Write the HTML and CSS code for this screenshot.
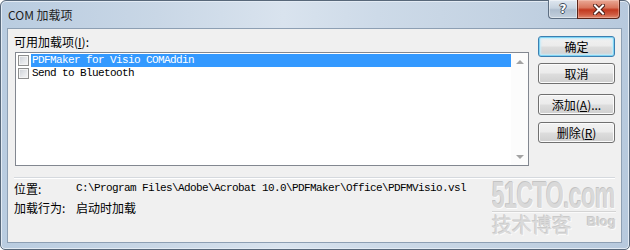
FILE: index.html
```html
<!DOCTYPE html>
<html lang="zh-CN">
<head>
<meta charset="utf-8">
<title>COM 加载项</title>
<link rel="stylesheet" href="styles.css">
</head>
<body>
<div class="window">
  <div class="titlebar">
    <span class="title">COM 加载项</span>
    <div class="caption-btns">
      <div class="cap help"><span class="qmark">?</span></div>
      <div class="cap close">
        <svg width="12" height="11" viewBox="0 0 12 11">
          <path d="M2 1.5 L10 9.5 M10 1.5 L2 9.5" stroke="#4b1d16" stroke-width="4" stroke-linecap="square" fill="none"/>
          <path d="M2 1.5 L10 9.5 M10 1.5 L2 9.5" stroke="#ffffff" stroke-width="2" stroke-linecap="square" fill="none"/>
        </svg>
      </div>
    </div>
  </div>
  <div class="client">
    <div class="top">
      <div class="left">
        <div class="label">可用加载项(<u>I</u>):</div>
        <div class="listbox">
          <div class="items">
            <div class="row selected"><span class="chk"></span><span class="txt">PDFMaker for Visio COMAddin</span></div>
            <div class="row"><span class="chk"></span><span class="txt">Send to Bluetooth</span></div>
          </div>
          <div class="vscroll">
            <div class="sbtn"><span class="arr up"></span></div>
            <div class="sbtn"><span class="arr down"></span></div>
          </div>
        </div>
      </div>
      <div class="buttons">
        <div class="btn default">确定</div>
        <div class="btn btn-cancel">取消</div>
        <div class="btn btn-add">添加(<u>A</u>)...</div>
        <div class="btn btn-del">删除(<u>R</u>)</div>
      </div>
    </div>
    <div class="sep"></div>
    <div class="info">
      <div class="irow"><span class="ilabel">位置:</span><span class="ival mono">C:\Program Files\Adobe\Acrobat 10.0\PDFMaker\Office\PDFMVisio.vsl</span></div>
      <div class="irow"><span class="ilabel">加载行为:</span><span class="ival">启动时加载</span></div>
    </div>
    <div class="watermark">
      <div class="wm-main">51CTO.com</div>
      <div class="wm-line"></div>
      <div class="wm-sub"><span class="wm-cn">技术博客</span><span class="wm-blog">Blog</span></div>
    </div>
  </div>
</div>
</body>
</html>
```

FILE: styles.css
```css
* { box-sizing: border-box; }
html, body { margin: 0; padding: 0; }
body {
  width: 630px;
  height: 250px;
  overflow: hidden;
  background: #ffffff;
  font-family: "Noto Sans CJK SC", "Noto Sans", sans-serif;
  font-size: 12px;
  color: #000;
}
.window {
  width: 630px;
  height: 250px;
  border: 1px solid #58687a;
  border-radius: 6px 6px 5px 5px;
  background: linear-gradient(to right, #b9cce0 0%, #c9d7e6 25%, #d9e3ee 45%, #cddae8 60%, #c3d2e2 80%, #b7c9dd 100%);
  padding: 0 7px 6px 6px;
  display: flex;
  flex-direction: column;
  box-shadow: inset 0 0 0 1px #e3ebf4;
}
.titlebar {
  height: 27px;
  display: flex;
  justify-content: space-between;
  align-items: flex-start;
  flex: none;
}
.title {
  padding: 6px 0 0 1px;
  line-height: 16px;
  font-size: 12px;
  color: #1e1e1e;
}
.caption-btns {
  display: flex;
  margin-top: -1px;
  margin-right: 2px;
}
.cap {
  height: 19px;
  display: flex;
  align-items: center;
  justify-content: center;
  border: 1px solid #5d6e82;
  border-top: none;
}
.help {
  width: 29px;
  border-right: none;
  border-radius: 0 0 0 4px;
  background: linear-gradient(#dfe7f0 0%, #c6d2df 45%, #aebdce 55%, #c3d0dd 100%);
  box-shadow: inset 0 0 0 1px rgba(255,255,255,0.45);
}
.qmark {
  font-family: "DejaVu Sans", sans-serif;
  font-weight: bold;
  font-size: 12px;
  line-height: 12px;
  color: #fff;
  text-shadow: 1px 0 0 #3f4b5a, -1px 0 0 #3f4b5a, 0 1px 0 #3f4b5a, 0 -1px 0 #3f4b5a;
}
.close {
  width: 43px;
  border-color: #5a2418;
  border-radius: 0 0 4px 0;
  background: linear-gradient(#eaa996 0%, #d9765d 42%, #c2391f 55%, #cf5a40 80%, #e08a70 100%);
  box-shadow: inset 0 0 0 1px rgba(255,220,210,0.35);
}
.client {
  position: relative;
  flex: 1;
  background: #f0f0f0;
  border: 1px solid #8d9fb3;
  padding: 7px 6px 0 6px;
}
.top {
  display: flex;
  gap: 9px;
}
.left {
  width: 515px;
}
.label {
  line-height: 12px;
  height: 12px;
  margin-bottom: 4px;
  white-space: nowrap;
}
.listbox {
  margin-left: 1px;
  width: 514px;
  height: 114px;
  border: 1px solid #828790;
  background: #fff;
  display: flex;
}
.items {
  flex: 1;
  padding: 1px 0 0 2px;
}
.row {
  height: 13px;
  display: flex;
  align-items: flex-start;
}
.chk {
  width: 11px;
  height: 11px;
  margin-top: 1px;
  flex: none;
  border: 1px solid #8e8f8f;
  background: linear-gradient(135deg, #cbcfd5 0%, #e7e9ec 60%, #f6f6f6 100%);
  box-shadow: inset 0 0 0 1px #f4f4f4;
}
.txt {
  flex: 1;
  margin-left: 2px;
  padding-left: 1px;
  height: 13px;
  line-height: 13px;
  font-family: "Liberation Mono", "DejaVu Sans Mono", monospace;
  font-size: 11px;
  letter-spacing: -0.6px;
  white-space: nowrap;
}
.row.selected .txt {
  background: #3399ff;
  color: #fff;
}
.vscroll {
  width: 17px;
  flex: none;
  display: flex;
  flex-direction: column;
  justify-content: space-between;
  background: #fcfcfc;
}
.sbtn {
  height: 17px;
  display: flex;
  align-items: center;
  justify-content: center;
}
.arr {
  width: 0;
  height: 0;
  border-left: 4px solid transparent;
  border-right: 4px solid transparent;
}
.arr.up { border-bottom: 4px solid #a3a3a3; }
.arr.down { border-top: 4px solid #a3a3a3; }
.buttons {
  width: 77px;
  display: flex;
  flex-direction: column;
}
.btn {
  height: 21px;
  border: 1px solid #707070;
  border-radius: 3px;
  background: linear-gradient(#f2f2f2 0%, #ebebeb 48%, #dddddd 52%, #cfcfcf 100%);
  box-shadow: inset 0 0 0 1px #fbfbfb;
  display: flex;
  align-items: center;
  justify-content: center;
  line-height: 12px;
  white-space: nowrap;
}
.btn.default {
  border-color: #3c7fb1;
  box-shadow: inset 0 0 0 1px #7fd4f4, inset 0 0 2px 2px #c8ecfa;
}
.btn-cancel { margin-top: 6px; }
.btn-add { margin-top: 10px; }
.btn-del { margin-top: 7px; }
.sep {
  margin-top: 11px;
  height: 2px;
  border-top: 1px solid #d5d9de;
  border-bottom: 1px solid #ffffff;
}
.irow {
  height: 19px;
  line-height: 19px;
  display: flex;
  white-space: nowrap;
}
.ilabel {
  width: 62px;
  flex: none;
}
.mono {
  font-family: "Liberation Mono", "DejaVu Sans Mono", monospace;
  font-size: 11px;
  letter-spacing: -0.6px;
}
.watermark {
  position: absolute;
  left: 484px;
  top: 152px;
  width: 124px;
  pointer-events: none;
}
.wm-main {
  width: max-content;
  font-family: "Liberation Sans", Arial, sans-serif;
  font-weight: bold;
  font-size: 36px;
  line-height: 30px;
  height: 30px;
  letter-spacing: -1px;
  color: #d9d9d9;
  white-space: nowrap;
  transform: scaleX(0.645);
  transform-origin: left center;
  text-shadow: -1px -1px 0 #c3c3c3, 1px 1px 0 #fbfbfb;
}
.wm-line {
  height: 2px;
  background: #d4d4d4;
  border-bottom: 1px solid #fafafa;
}
.wm-sub {
  display: flex;
  align-items: flex-start;
  justify-content: space-between;
  margin-top: 1px;
}
.wm-cn {
  font-size: 20px;
  line-height: 22px;
  color: #dadada;
  text-shadow: -1px -1px 0 #cacaca, 1px 1px 0 #fafafa;
}
.wm-blog {
  font-family: "Liberation Sans", Arial, sans-serif;
  font-weight: bold;
  font-size: 13px;
  line-height: 14px;
  margin-top: 1px;
  color: #d6d6d6;
  text-shadow: -1px -1px 0 #c6c6c6, 1px 1px 0 #fafafa;
}
```
